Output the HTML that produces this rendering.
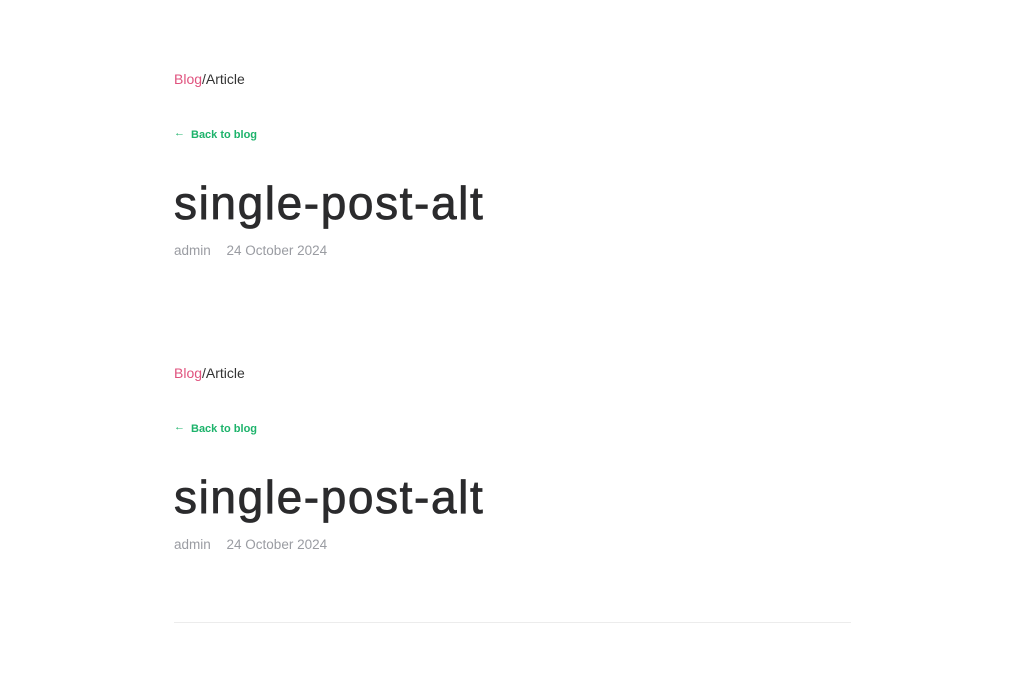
<!DOCTYPE html>
<html><head><meta charset="utf-8"><style>
body{margin:0;background:#fff;width:1024px;height:691px;position:relative;font-family:"Liberation Sans",sans-serif;overflow:hidden}
.b{position:absolute;left:174px;width:677px}
.bc{position:absolute;top:71px;font-size:14px;color:#333;white-space:nowrap}
.bc span{color:#e0527e}
.back{position:absolute;top:129px;font-size:11px;color:#1db36b;font-weight:bold;white-space:nowrap}
.back i{font-style:normal;font-weight:normal;font-size:11px;margin-right:6px;position:relative;top:-2px}
h1{position:absolute;top:176px;margin:0;font-size:46px;font-weight:normal;color:#2b2b2d;letter-spacing:1.6px;-webkit-text-stroke:0.8px #2b2b2d;white-space:nowrap;line-height:54px}
.meta{position:absolute;top:243px;font-size:13.5px;color:#9a9ca2;white-space:nowrap}
.meta b{font-weight:normal;margin-left:12px}
hr{position:absolute;left:174px;top:622px;width:677px;margin:0;border:0;border-top:1px solid #ececec}
</style></head><body>
<div class="b" style="top:0">
<div class="bc"><span>Blog</span>/Article</div>
<div class="back"><i>←</i>Back to blog</div>
<h1>single-post-alt</h1>
<div class="meta">admin <b>24 October 2024</b></div>
</div>
<div class="b" style="top:294px">
<div class="bc"><span>Blog</span>/Article</div>
<div class="back"><i>←</i>Back to blog</div>
<h1>single-post-alt</h1>
<div class="meta">admin <b>24 October 2024</b></div>
</div>
<hr>
</body></html>
